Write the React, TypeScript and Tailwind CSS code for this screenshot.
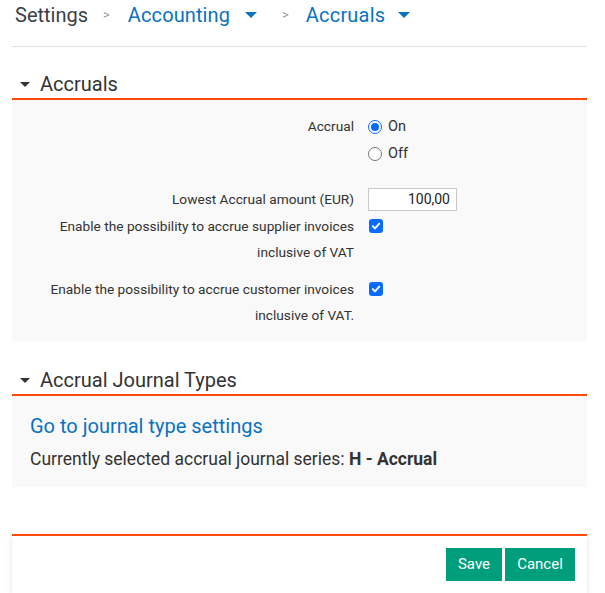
import React from 'react'

const Caret = ({ className }: { className: string }) => (
  <svg width="12" height="6" viewBox="0 0 12 6" className={className}>
    <path d="M0 0 L12 0 L6 6 Z" fill="currentColor" />
  </svg>
)

const Radio = ({ checked }: { checked: boolean }) =>
  checked ? (
    <span className="w-[14px] h-[14px] rounded-full border-[1.5px] border-[#0a6cff] flex items-center justify-center bg-white">
      <span className="w-[8px] h-[8px] rounded-full bg-[#0a6cff]" />
    </span>
  ) : (
    <span className="w-[14px] h-[14px] rounded-full border border-[#767676] bg-white" />
  )

const Check = () => (
  <span className="w-[14px] h-[14px] rounded-[3px] bg-[#0a6cff] flex items-center justify-center mt-[6px]">
    <svg width="10" height="10" viewBox="0 0 10 10">
      <path d="M1.8 5.2 L4 7.4 L8.3 2.6" stroke="white" strokeWidth="1.9" fill="none" strokeLinecap="round" strokeLinejoin="round" />
    </svg>
  </span>
)

const SectionHead = ({ title, mt }: { title: string; mt: string }) => (
  <div className={`flex items-center ${mt} pb-[2px] border-b-2 border-[#fc4a0a] text-[#333] text-[20px] leading-[24px]`}>
    <Caret className="w-[10px] h-[5px] ml-[8px] mr-[10px] text-[#333]" />
    <span>{title}</span>
  </div>
)

export default function App() {
  return (
    <div className="pl-3 pr-[18px] font-['Roboto',sans-serif] bg-white min-h-[593px]">
      {/* breadcrumb */}
      <div className="h-[47px] border-b border-[#e3e3e3]">
        <div className="flex items-center h-[29px] pl-[3px] text-[20px]">
          <span className="text-[#3b4045]">Settings</span>
          <span className="text-[#9a9a9a] text-[13px] ml-[15px] mr-[18px]">&gt;</span>
          <span className="text-[#0a72c2] tracking-[0.1px]">Accounting</span>
          <Caret className="ml-[15px] text-[#0a72c2]" />
          <span className="text-[#9a9a9a] text-[13px] ml-[25px] mr-[17px]">&gt;</span>
          <span className="text-[#0a72c2] tracking-[0.2px]">Accruals</span>
          <Caret className="ml-[13px] text-[#0a72c2]" />
        </div>
      </div>

      <SectionHead title="Accruals" mt="mt-[25px]" />
      <div className="bg-[#f9f9f9] pt-[13px] pb-[13px] text-[13.7px] text-[#333]">
        <div className="flex">
          <div className="w-[342px] text-right leading-[27px]">Accrual</div>
          <div className="ml-[14px] flex flex-col">
            <div className="flex items-center h-[27px] gap-[6px]">
              <Radio checked />
              <span className="text-[14.5px]">On</span>
            </div>
            <div className="flex items-center h-[27px] gap-[6px]">
              <Radio checked={false} />
              <span className="text-[14.5px]">Off</span>
            </div>
          </div>
        </div>
        <div className="flex items-center h-[26px] mt-[19px]">
          <div className="w-[342px] text-right">Lowest Accrual amount (EUR)</div>
          <div className="ml-[14px] w-[89px] h-[23px] border border-[#c8c8c8] bg-white text-right pr-[6px] leading-[21px] text-[14px] text-[#222]">
            100,00
          </div>
        </div>
        <div className="flex mt-[1px]">
          <div className="w-[342px] text-right leading-[26px]">
            Enable the possibility to accrue supplier invoices
            <br />
            inclusive of VAT
          </div>
          <div className="ml-[15px]">
            <Check />
          </div>
        </div>
        <div className="flex mt-[11px]">
          <div className="w-[342px] text-right leading-[26px]">
            Enable the possibility to accrue customer invoices
            <br />
            inclusive of VAT.
          </div>
          <div className="ml-[15px]">
            <Check />
          </div>
        </div>
      </div>

      <SectionHead title="Accrual Journal Types" mt="mt-[27px]" />
      <div className="bg-[#f9f9f9] pt-[17px] pb-[16px] px-[18px]">
        <div className="text-[20px] leading-[26px] text-[#0a72c2]">Go to journal type settings</div>
        <div className="mt-[8px] text-[17.5px] leading-[24px] text-[#333]">
          Currently selected accrual journal series: <b>H - Accrual</b>
        </div>
      </div>

      <div className="mt-[47px] border-t-2 border-[#fc4a0a] bg-white shadow-[0_2px_6px_rgba(0,0,0,0.12)] pt-[12px] pb-[12px] pr-[12px] flex justify-end gap-[3px]">
        <button className="h-[33px] w-[56px] bg-[#009e7b] text-white text-[15px]">Save</button>
        <button className="h-[33px] w-[70px] bg-[#009e7b] text-white text-[15px]">Cancel</button>
      </div>
    </div>
  )
}
